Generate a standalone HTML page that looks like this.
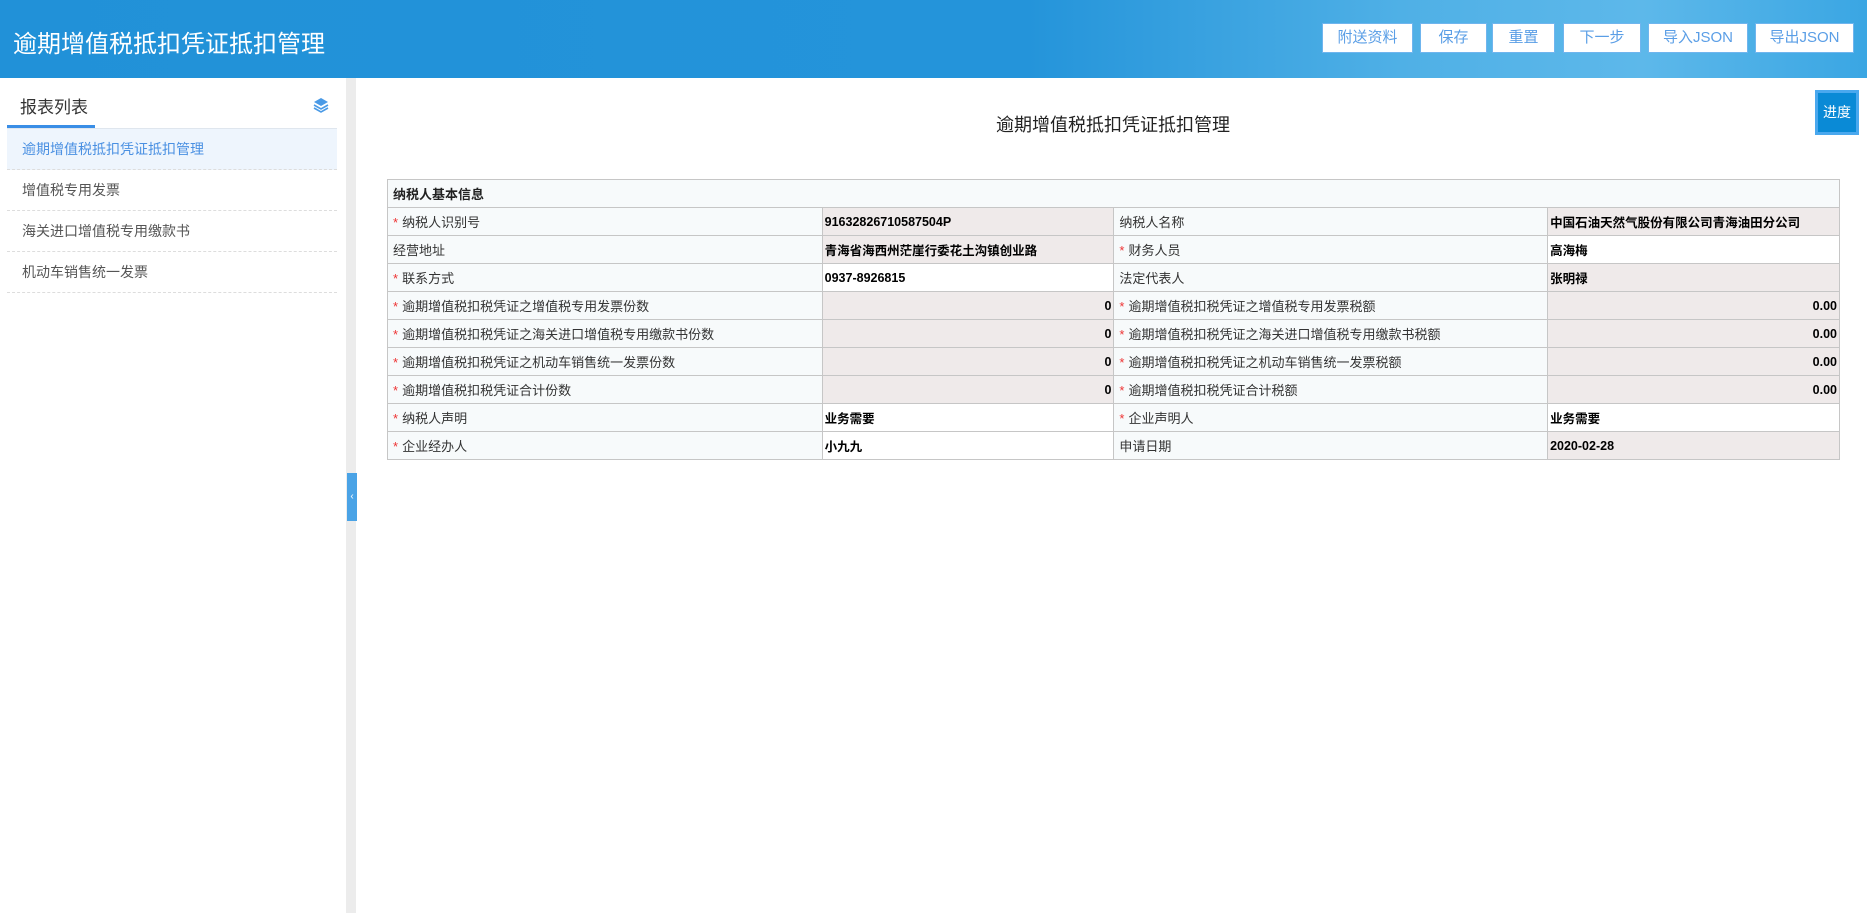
<!DOCTYPE html>
<html><head><meta charset="utf-8"><style>
*{margin:0;padding:0;box-sizing:border-box}
body{width:1867px;height:913px;overflow:hidden;background:#fff;font-family:"Liberation Sans","Noto Sans CJK SC",sans-serif;position:relative}
.hdr{position:absolute;left:0;top:0;width:1867px;height:78px;background:linear-gradient(90deg,#2191d8 0%,#2494da 55%,#4fb0e6 75%,#5db8ea 88%,#3aa6e3 100%)}
.hdr h1{position:absolute;left:13px;top:24px;color:#fff;font-size:24px;font-weight:normal;letter-spacing:0}
.btn{position:absolute;top:23px;height:30px;background:#fff;border:1px solid #6fb5ee;color:#5a9ee6;font-size:15px;line-height:28px;text-align:center}
.side{position:absolute;left:0;top:78px;width:346px;height:835px;background:#fff}
.strip{position:absolute;left:346px;top:78px;width:10px;height:835px;background:#ececec}
.ctab{position:absolute;left:347px;top:473px;width:10px;height:48px;background:#4aa3e6;color:#fff;font-size:10px;line-height:48px;text-align:center}
.stitle{position:absolute;left:20px;font-size:17px;color:#333}
.sline{position:absolute;left:7px;width:330px;height:1px;background:#dfe6ee}
.sul{position:absolute;left:7px;width:88px;height:3px;background:#3a8ee6}
.item{position:absolute;left:7px;width:330px;height:41px;border-bottom:1px dashed #ddd;font-size:14px;color:#555;line-height:40px;padding-left:15px}
.ptitle{position:absolute;top:111px;text-align:center;font-size:18px;color:#222}
.jd{position:absolute;left:1815px;top:90px;width:44px;height:45px;background:#0a8ad6;border:3px solid #4aa8ee;color:#fff;font-size:14px;line-height:39px;text-align:center}
table{position:absolute;left:387px;top:179px;width:1453px;border-collapse:collapse;font-size:13px;color:#333}
td{border:1px solid #c6c6c6;height:28px;padding:0 5px;white-space:nowrap}
td.l{background:#f7fafb}
td.v{background:#fff;color:#000;padding-left:2px;font-size:12.5px;font-weight:bold}
td.g{background:#efeaea;color:#000;padding-left:2px;font-size:12.5px;font-weight:bold}
td.r{text-align:right;padding-right:2px}
.s{color:#e33;margin-right:4px}
</style></head><body>
<div class="hdr"><h1>逾期增值税抵扣凭证抵扣管理</h1>
<div class="btn" style="left:1322px;width:91px">附送资料</div>
<div class="btn" style="left:1420px;width:67px">保存</div>
<div class="btn" style="left:1492px;width:63px">重置</div>
<div class="btn" style="left:1563px;width:78px">下一步</div>
<div class="btn" style="left:1648px;width:100px">导入JSON</div>
<div class="btn" style="left:1755px;width:99px">导出JSON</div>
</div>
<div class="side">
<div class="stitle" style="top:15px">报表列表</div>
<svg style="position:absolute;left:313px;top:19px" width="16" height="16" viewBox="0 0 16 16"><path d="M8 1L15 5 8 9 1 5z" fill="#4a9ae6"/><path d="M1 8l7 4 7-4M1 11l7 4 7-4" fill="none" stroke="#4a9ae6" stroke-width="1.6"/></svg>
<div class="sline" style="top:50px"></div>
<div class="sul" style="top:47px"></div>
<div class="item" style="top:51px;background:#eef5fd;color:#4a90e2">逾期增值税抵扣凭证抵扣管理</div>
<div class="item" style="top:92px">增值税专用发票</div>
<div class="item" style="top:133px">海关进口增值税专用缴款书</div>
<div class="item" style="top:174px">机动车销售统一发票</div>
</div>
<div class="strip"></div>
<div class="ctab">‹</div>
<div class="ptitle" style="left:0;width:2226px">逾期增值税抵扣凭证抵扣管理</div>
<div class="jd">进度</div>
<table>
<colgroup><col style="width:435px"><col style="width:292px"><col style="width:434px"><col style="width:292px"></colgroup>
<tr><td class="l" colspan="4" style="font-weight:bold;color:#222">纳税人基本信息</td></tr>
<tr><td class="l"><span class="s">*</span>纳税人识别号</td><td class="g">91632826710587504P</td><td class="l">纳税人名称</td><td class="g">中国石油天然气股份有限公司青海油田分公司</td></tr>
<tr><td class="l">经营地址</td><td class="g">青海省海西州茫崖行委花土沟镇创业路</td><td class="l"><span class="s">*</span>财务人员</td><td class="v">高海梅</td></tr>
<tr><td class="l"><span class="s">*</span>联系方式</td><td class="v">0937-8926815</td><td class="l">法定代表人</td><td class="g">张明禄</td></tr>
<tr><td class="l"><span class="s">*</span>逾期增值税扣税凭证之增值税专用发票份数</td><td class="g r">0</td><td class="l"><span class="s">*</span>逾期增值税扣税凭证之增值税专用发票税额</td><td class="g r">0.00</td></tr>
<tr><td class="l"><span class="s">*</span>逾期增值税扣税凭证之海关进口增值税专用缴款书份数</td><td class="g r">0</td><td class="l"><span class="s">*</span>逾期增值税扣税凭证之海关进口增值税专用缴款书税额</td><td class="g r">0.00</td></tr>
<tr><td class="l"><span class="s">*</span>逾期增值税扣税凭证之机动车销售统一发票份数</td><td class="g r">0</td><td class="l"><span class="s">*</span>逾期增值税扣税凭证之机动车销售统一发票税额</td><td class="g r">0.00</td></tr>
<tr><td class="l"><span class="s">*</span>逾期增值税扣税凭证合计份数</td><td class="g r">0</td><td class="l"><span class="s">*</span>逾期增值税扣税凭证合计税额</td><td class="g r">0.00</td></tr>
<tr><td class="l"><span class="s">*</span>纳税人声明</td><td class="v">业务需要</td><td class="l"><span class="s">*</span>企业声明人</td><td class="v">业务需要</td></tr>
<tr><td class="l"><span class="s">*</span>企业经办人</td><td class="v">小九九</td><td class="l">申请日期</td><td class="g">2020-02-28</td></tr>
</table>
</body></html>
